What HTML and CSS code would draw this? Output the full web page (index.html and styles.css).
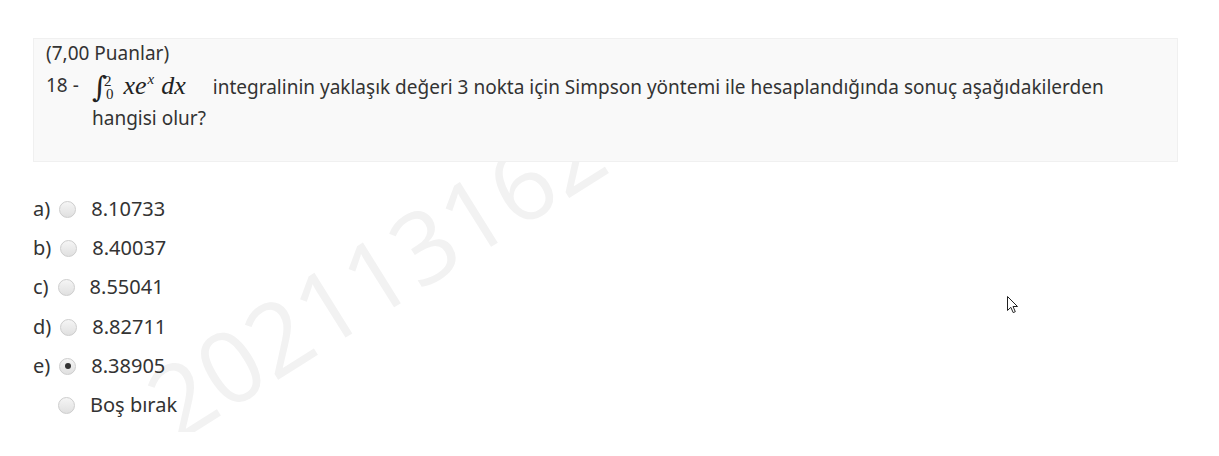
FILE: index.html
```html
<!DOCTYPE html>
<html lang="tr">
<head>
<meta charset="utf-8">
<title>Soru 18</title>
<link rel="stylesheet" href="styles.css">
</head>
<body>
<div class="page">
  <div class="question">
    <div class="points">(7,00 Puanlar)</div>
    <div class="qrow">
      <div class="qnum">18 -</div>
      <div class="qtext"><span class="math"><span class="int">∫</span><span class="lims"><span class="sup">2</span><span class="sub">0</span></span><i class="mv">xe</i><sup class="msup">x</sup><i class="mv dx">dx</i></span>integralinin yaklaşık değeri 3 nokta için Simpson yöntemi ile hesaplandığında sonuç aşağıdakilerden hangisi olur?</div>
    </div>
  </div>
  <div class="answers">
    <div class="watermark">20211316260</div>
    <div class="opt"><span class="lbl">a)</span><span class="radio"></span><span class="val">8.10733</span></div>
    <div class="opt"><span class="lbl">b)</span><span class="radio"></span><span class="val">8.40037</span></div>
    <div class="opt"><span class="lbl">c)</span><span class="radio"></span><span class="val">8.55041</span></div>
    <div class="opt"><span class="lbl">d)</span><span class="radio"></span><span class="val">8.82711</span></div>
    <div class="opt"><span class="lbl">e)</span><span class="radio checked"></span><span class="val">8.38905</span></div>
    <div class="opt"><span class="lbl blank"></span><span class="radio"></span><span class="val">Boş bırak</span></div>
  </div>
</div>
<svg class="cursor" width="13" height="19" viewBox="0 0 13 19"><path d="M1.5 1.5 L1.5 15.5 L4.8 12.3 L7.2 17.6 L9.3 16.7 L7 11.5 L11.5 11.5 Z" fill="#fff" stroke="#222" stroke-width="1" stroke-linejoin="round"/></svg>
</body>
</html>
```
FILE: styles.css
```css
html, body {
  margin: 0;
  padding: 0;
  background: #fff;
}
body {
  font-family: "Noto Sans", "Open Sans", sans-serif;
  font-size: 19px;
  color: #333;
  position: relative;
  width: 1219px;
  height: 456px;
  overflow: hidden;
}
.page {
  padding: 38px 41px 0 33px;
}
.question {
  background: #f9f9f9;
  border: 1px solid #f0f0f0;
  padding: 3px 12px 30px 12px;
  height: 124px;
  box-sizing: border-box;
}
.points {
  line-height: 22px;
}
.qrow {
  display: flex;
  margin-top: 6px;
}
.qnum {
  width: 46px;
  flex: none;
  line-height: 31px;
}
.qtext {
  flex: 1;
  line-height: 31px;
}
.math {
  font-family: "Liberation Serif", "DejaVu Serif", serif;
  font-size: 26px;
  color: #222;
  margin-right: 27px;
  white-space: nowrap;
}
.int {
  display: inline-block;
  width: 11px;
  font-family: "DejaVu Serif", serif;
  font-size: 29px;
  vertical-align: -3px;
  line-height: 20px;
}
.lims {
  display: inline-flex;
  flex-direction: column;
  vertical-align: middle;
  font-size: 15px;
  line-height: 13px;
  margin: 0 10px 0 1px;
}
.sub {
  margin-left: 2px;
}
.mv {
  font-style: italic;
}
.msup {
  font-style: italic;
  font-size: 15px;
  vertical-align: 10px;
  line-height: 0;
  margin: 0 7px 0 1px;
}
.answers {
  position: relative;
  overflow: hidden;
  height: 270px;
  box-sizing: border-box;
  padding-top: 27px;
  font-size: 20px;
}
.watermark {
  position: absolute;
  left: 144px;
  top: 192px;
  font-family: "Open Sans", sans-serif;
  font-size: 100px;
  line-height: 100px;
  color: #f2f2f2;
  white-space: nowrap;
  transform-origin: 0 88.8px;
  transform: rotate(-32deg);
  pointer-events: none;
}
.opt {
  position: relative;
  line-height: 39.2px;
  height: 39.2px;
  white-space: nowrap;
}
.lbl {
  display: inline-block;
}
.lbl.blank {
  width: 16px;
}
.radio {
  display: inline-block;
  width: 15px;
  height: 15px;
  border-radius: 50%;
  border: 1px solid #cdcdcd;
  background: linear-gradient(#f5f5f5, #e0e0e0);
  vertical-align: -2px;
  margin: 0 15px 0 9px;
  position: relative;
}
.radio.checked::after {
  content: "";
  position: absolute;
  left: 4.5px;
  top: 4.5px;
  width: 6px;
  height: 6px;
  border-radius: 50%;
  background: #333;
}
.cursor {
  position: absolute;
  left: 1006px;
  top: 295px;
}
```
